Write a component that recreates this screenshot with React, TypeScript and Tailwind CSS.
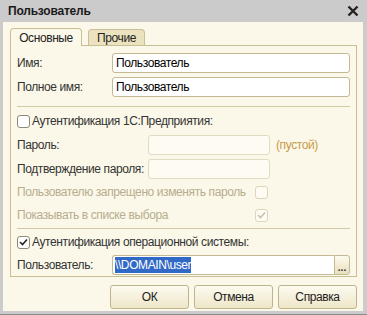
const font = { fontFamily: '"Liberation Sans", Arial, sans-serif' };

const Check = ({ checked, disabled }: { checked?: boolean; disabled?: boolean }) => (
  <span
    className={
      'w-[13px] h-[13px] rounded-[3px] border flex items-center justify-center shrink-0 ' +
      (disabled ? 'border-[#ddd5bb] bg-[#fdfbf2]' : 'border-[#8f8a78] bg-white')
    }
  >
    {checked && (
      <svg width="9" height="8" viewBox="0 0 9 8">
        <path
          d="M1 4 L3.5 6.5 L8 1.5"
          fill="none"
          stroke={disabled ? '#c9c2ab' : '#222'}
          strokeWidth="1.6"
        />
      </svg>
    )}
  </span>
);

const Field = ({ value, disabled, w }: { value?: string; disabled?: boolean; w: string }) => (
  <div
    className={
      'h-[20px] rounded-[3px] border px-[3px] flex items-center text-black ' +
      w +
      (disabled ? ' border-[#e2dac2] bg-[#fdfbf2]' : ' border-[#c3b994] bg-white')
    }
  >
    {value}
  </div>
);

const Btn = ({ label }: { label: string }) => (
  <button className="w-[79px] h-[24px] rounded-[3px] border border-[#bfb48c] bg-gradient-to-b from-[#fdfbf0] to-[#eee6c8] text-[#222]">
    {label}
  </button>
);

export default function App() {
  return (
    <div style={font} className="w-[367px] h-[315px] bg-[#cbcbcb] flex flex-col pl-[3px] pr-[4px] pb-[3px] border-b border-[#8a8a8a] whitespace-nowrap text-[12px] tracking-[-0.4px]">
      <div className="h-[22px] flex items-center justify-between pl-[5px] pr-[4px]">
        <span className="font-bold text-[#1a1a1a] tracking-[-0.2px]">Пользователь</span>
        <svg width="12" height="12" viewBox="0 0 12 12">
          <path d="M1.5 1.5 L10.5 10.5 M10.5 1.5 L1.5 10.5" stroke="#222" strokeWidth="2.4" />
        </svg>
      </div>
      <div className="flex-1 bg-[#fbf8e9] flex flex-col pt-[5px] pl-[7px] pr-[6px]">
        <div className="flex items-end h-[18px] gap-[6px] text-[#222]">
          <div className="w-[72px] h-[18px] rounded-t-[4px] border border-b-0 border-[#c9bf95] bg-[#fbf8e9] flex items-center justify-center relative top-[1px]">
            Основные
          </div>
          <div className="w-[57px] h-[16px] rounded-t-[4px] border border-b-0 border-[#c9bf95] bg-[#ece2bf] flex items-center justify-center">
            Прочие
          </div>
        </div>
        <div className="h-[232px] border border-[#c9bf95] flex flex-col pl-[6px] pr-[6px] pt-[7px] text-[#333]">
          <div className="flex items-center h-[20px]">
            <span className="w-[95px]">Имя:</span>
            <Field value="Пользователь" w="flex-1" />
          </div>
          <div className="flex items-center h-[20px] mt-[4px]">
            <span className="w-[95px]">Полное имя:</span>
            <Field value="Пользователь" w="flex-1" />
          </div>
          <div className="h-px bg-[#d3c9a3] mt-[9px]" />
          <div className="flex items-center h-[16px] mt-[6px] gap-[2px]">
            <Check />
            <span>Аутентификация 1С:Предприятия:</span>
          </div>
          <div className="flex items-center h-[20px] mt-[6px]">
            <span className="w-[131px]">Пароль:</span>
            <Field disabled w="w-[122px]" />
            <span className="ml-[6px] text-[#c79b4a]">(пустой)</span>
          </div>
          <div className="flex items-center h-[20px] mt-[4px]">
            <span className="w-[131px]">Подтверждение пароля:</span>
            <Field disabled w="w-[122px]" />
          </div>
          <div className="flex items-center h-[20px] mt-[3px] text-[#b8ad8e]">
            <span className="w-[238px]">Пользователю запрещено изменять пароль</span>
            <Check disabled />
          </div>
          <div className="flex items-center h-[20px] mt-[3px] text-[#b8ad8e]">
            <span className="w-[238px]">Показывать в списке выбора</span>
            <Check disabled checked />
          </div>
          <div className="h-px bg-[#d3c9a3] mt-[3px]" />
          <div className="flex items-center h-[16px] mt-[5px] gap-[2px]">
            <Check checked />
            <span>Аутентификация операционной системы:</span>
          </div>
          <div className="flex items-center h-[20px] mt-[5px]">
            <span className="w-[95px]">Пользователь:</span>
            <div className="flex-1 flex h-[20px]">
              <div className="flex-1 rounded-l-[3px] border border-r-0 border-[#c3b994] bg-white flex items-center pl-[2px] text-black">
                <span className="bg-[#3169c6] text-white leading-[16px]">\\DOMAIN\user</span>
              </div>
              <div className="w-[16px] rounded-r-[3px] border border-[#c3b994] bg-gradient-to-b from-[#fdfbf0] to-[#e9dfbb] flex items-end justify-center pb-[3px]">
                <span className="text-[10px] leading-[6px] font-bold text-[#333] tracking-normal">...</span>
              </div>
            </div>
          </div>
        </div>
        <div className="flex justify-end gap-[5px] mt-[8px]">
          <Btn label="ОК" />
          <Btn label="Отмена" />
          <Btn label="Справка" />
        </div>
      </div>
    </div>
  );
}
